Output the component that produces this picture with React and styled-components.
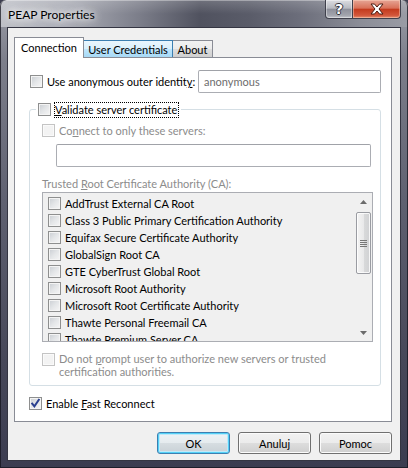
import React from 'react';
import styled, { createGlobalStyle, css } from 'styled-components';

const GlobalStyle = createGlobalStyle`
  html, body {
    margin: 0;
    padding: 0;
    width: 408px;
    height: 468px;
    overflow: hidden;
    background: #3d3e50;
  }
  body {
    font-family: Lato, "Noto Sans", "Liberation Sans", sans-serif;
    font-size: 11px;
    color: #000;
  }
  * { box-sizing: border-box; }
`;

const Window = styled.div`
  width: 408px;
  height: 468px;
  padding: 0 7px 7px;
  display: flex;
  flex-direction: column;
  border-radius: 6px 6px 0 0;
  box-shadow: inset 0 0 0 1px rgba(20, 20, 30, 0.75);
  background: linear-gradient(180deg, #9c9ea8 0px, #7d7f8b 60px, #5f6171 200px, #474859 360px, #3b3c50 468px);
`;

const TitleBar = styled.div`
  height: 27px;
  margin: 0 -7px;
  padding: 0 7px 0 8px;
  display: flex;
  align-items: flex-start;
  border-radius: 6px 6px 0 0;
  box-shadow: inset 0 1px 0 rgba(255, 255, 255, 0.35), inset 1px 0 0 rgba(20, 20, 30, 0.75), inset -1px 0 0 rgba(20, 20, 30, 0.75);
  background:
    linear-gradient(180deg, rgba(255, 255, 255, 0.18) 0, rgba(255, 255, 255, 0) 14px),
    linear-gradient(90deg, #bfc1c8 0px, #a9abb4 70px, #7b7d89 140px, #50525f 200px, #5a5c69 250px, #6c6e7b 300px, #8b8d97 360px, #9a9ca5 408px);
`;

const Title = styled.div`
  padding-top: 7px;
  line-height: 16px;
  font-size: 12px;
  color: #000;
  white-space: nowrap;
  text-shadow: 0 0 6px #fff, 0 0 10px rgba(255, 255, 255, 0.9), 0 0 14px rgba(255, 255, 255, 0.7);
`;

const Caption = styled.div`
  margin-left: auto;
  display: flex;
`;

const CaptionButton = styled.div`
  width: ${p => p.$w}px;
  height: 19px;
  display: flex;
  align-items: center;
  justify-content: center;
  border: 1px solid #3f404c;
  border-top: none;
  ${p => p.$close ? css`
    border-radius: 0 0 4px 0;
    border-left: none;
    background: linear-gradient(180deg, #e6a595 0%, #d97159 45%, #c43b1e 52%, #d2563a 85%, #e58e6f 100%);
    box-shadow: inset 0 0 0 1px rgba(255, 220, 200, 0.45);
  ` : css`
    border-radius: 0 0 0 4px;
    background: linear-gradient(180deg, #dcdde2 0%, #b9bbc2 45%, #8f919c 52%, #a2a4ad 85%, #c3c5cb 100%);
    box-shadow: inset 0 0 0 1px rgba(255, 255, 255, 0.4);
  `}
`;

const HelpGlyph = styled.span`
  font-family: "DejaVu Sans", sans-serif;
  font-weight: bold;
  font-size: 14px;
  line-height: 14px;
  color: #fff;
  text-shadow: 1px 0 0 #30323c, -1px 0 0 #30323c, 0 1px 0 #30323c, 0 -1px 0 #30323c;
`;

const Client = styled.div`
  flex: 1;
  display: flex;
  flex-direction: column;
  background: #f0f0f0;
  border: 1px solid #343542;
  padding: 9px 8px 6px 6px;
`;

const TabStrip = styled.div`
  height: 20px;
  display: flex;
  align-items: flex-end;
`;

const Tab = styled.div`
  width: ${p => p.$w}px;
  height: 17px;
  display: flex;
  align-items: center;
  justify-content: center;
  white-space: nowrap;
  border: 1px solid #898c95;
  border-bottom: none;
  margin-left: -1px;
  background: linear-gradient(180deg, #f2f2f2 0%, #ebebeb 50%, #dddddd 51%, #cfcfcf 100%);
  ${p => p.$hover && css`
    border-color: #3c7fb1;
    position: relative;
    z-index: 1;
    background: linear-gradient(180deg, #eaf6fd 0%, #d9f0fc 50%, #bee6fd 51%, #a7d9f5 100%);
  `}
  ${p => p.$active && css`
    height: 21px;
    margin-left: 0;
    margin-bottom: -1px;
    position: relative;
    z-index: 2;
    background: #fff;
    padding-bottom: 2px;
  `}
`;

const Panel = styled.div`
  height: 365px;
  background: #fff;
  border: 1px solid #898c95;
  padding: 12px 10px 0 14px;
  display: flex;
  flex-direction: column;
`;

const Row = styled.div`
  display: flex;
  align-items: ${p => p.$top ? 'flex-start' : 'center'};
  min-height: ${p => p.$h || 15}px;
  margin-top: ${p => p.$mt || 0}px;
  padding-left: ${p => p.$pl || 0}px;
  color: ${p => p.$disabled ? '#8c8c8c' : '#000'};
  line-height: 13px;
  white-space: nowrap;
`;

const Box = styled.span`
  flex: none;
  width: 13px;
  height: 13px;
  margin-right: 4px;
  margin-top: ${p => p.$mt || 0}px;
  display: inline-flex;
  align-items: center;
  justify-content: center;
  border: 1px solid #8e8f8f;
  background: linear-gradient(135deg, #c9cdd2 0%, #e4e6e8 50%, #f6f6f6 100%);
  box-shadow: inset 0 0 0 1px #f4f4f4;
  ${p => p.$disabled && css`
    border-color: #c4c4c4;
    background: #f3f3f3;
    box-shadow: inset 0 0 0 1px #fafafa;
  `}
`;

const Check = ({ checked, disabled, mt }) => (
  <Box $disabled={disabled} $mt={mt}>
    {checked && (
      <svg width="11" height="11" viewBox="0 0 11 11">
        <path d="M2.2 5.6 L4.4 8.4 L8.8 1.8" fill="none" stroke="#2a3f8f" strokeWidth="2" strokeLinecap="square" />
      </svg>
    )}
  </Box>
);

const TextInput = styled.div`
  height: 23px;
  width: ${p => p.$w}px;
  margin-left: ${p => p.$ml || 0}px;
  margin-top: ${p => p.$mt || 0}px;
  display: flex;
  align-items: center;
  padding-left: 5px;
  background: #fff;
  border: 1px solid #abadb3;
  border-top-color: #a0a2a8;
  border-radius: 2px;
  color: #6d6d6d;
`;

const Group = styled.fieldset`
  margin: 9px 0 0;
  padding: 6px 7px 7px 12px;
  border: 1px solid #d5dfe5;
  border-radius: 3px;
  min-width: 0;
`;

const Legend = styled.legend`
  margin-left: -6px;
  padding: 0 3px 0 2px;
  height: 15px;
`;

const LegendInner = styled.span`
  display: inline-flex;
  align-items: center;
  height: 15px;
  white-space: nowrap;
`;

const Focus = styled.span`
  outline: 1px dotted #000;
  outline-offset: 0;
  line-height: 13px;
  padding: 0 1px 1px 0;
`;

const Label = styled.div`
  margin-top: ${p => p.$mt || 0}px;
  height: 16px;
  line-height: 16px;
  color: #8c8c8c;
  white-space: nowrap;
`;

const ListBox = styled.div`
  height: 150px;
  display: flex;
  border: 1px solid #abadb3;
  background: #f0f0f0;
  overflow: hidden;
`;

const Items = styled.div`
  flex: 1;
  padding: 2px 0 0 5px;
  overflow: hidden;
`;

const Item = styled.div`
  height: 17px;
  display: flex;
  align-items: center;
  white-space: nowrap;
`;

const ScrollBar = styled.div`
  width: 17px;
  display: flex;
  flex-direction: column;
`;

const Arrow = styled.div`
  height: 17px;
  display: flex;
  align-items: center;
  justify-content: center;
`;

const Track = styled.div`
  flex: 1;
  padding: 2px 1px 0 0;
`;

const Thumb = styled.div`
  height: 62px;
  width: 15px;
  margin-left: 1px;
  border: 1px solid #9a9ca2;
  border-radius: 2px;
  display: flex;
  align-items: center;
  justify-content: center;
  background: linear-gradient(90deg, #f4f4f4 0%, #e9e9ea 50%, #d9dadb 51%, #d0d1d3 100%);
  box-shadow: inset 0 0 0 1px rgba(255, 255, 255, 0.8);
`;

const Grip = styled.div`
  width: 7px;
  height: 7px;
  background: repeating-linear-gradient(180deg, #777 0, #777 1px, transparent 1px, transparent 2px);
`;

const Buttons = styled.div`
  margin-top: 10px;
  display: flex;
  justify-content: flex-end;
  gap: 8px;
`;

const Button = styled.div`
  width: 73px;
  height: 22px;
  display: flex;
  align-items: center;
  justify-content: center;
  border: 1px solid #707070;
  border-radius: 3px;
  background: linear-gradient(180deg, #f2f2f2 0%, #ebebeb 50%, #dddddd 51%, #cfcfcf 100%);
  box-shadow: inset 0 0 0 1px #fbfbfb;
  ${p => p.$default && css`
    border-color: #3c7fb1;
    background: linear-gradient(180deg, #eef3f6 0%, #e5ebee 50%, #d6dde1 51%, #c9d1d6 100%);
    box-shadow: inset 0 0 0 1px #54d1f7, inset 0 0 0 2px #bfe9f9;
  `}
`;

const ArrowIcon = ({ up }) => (
  <svg width="7" height="4" viewBox="0 0 7 4">
    <path d={up ? 'M0 4 L3.5 0 L7 4 Z' : 'M0 0 L3.5 4 L7 0 Z'} fill="#6b6b6b" />
  </svg>
);

const certs = [
  'AddTrust External CA Root',
  'Class 3 Public Primary Certification Authority',
  'Equifax Secure Certificate Authority',
  'GlobalSign Root CA',
  'GTE CyberTrust Global Root',
  'Microsoft Root Authority',
  'Microsoft Root Certificate Authority',
  'Thawte Personal Freemail CA',
  'Thawte Premium Server CA',
];

export default function App() {
  return (
    <>
      <GlobalStyle />
      <Window>
        <TitleBar>
          <Title>PEAP Properties</Title>
          <Caption>
            <CaptionButton $w={28}><HelpGlyph>?</HelpGlyph></CaptionButton>
            <CaptionButton $w={48} $close>
              <svg width="14" height="12" viewBox="0 0 14 12">
                <path d="M1 1 H4.5 L7 4 L9.5 1 H13 L9 6 L13 11 H9.5 L7 8 L4.5 11 H1 L5 6 Z" fill="#fff" stroke="#4a1c12" strokeWidth="1" strokeLinejoin="round" />
              </svg>
            </CaptionButton>
          </Caption>
        </TitleBar>

        <Client>
          <TabStrip>
            <Tab $w={70} $active>Connection</Tab>
            <Tab $w={90} $hover>User Credentials</Tab>
            <Tab $w={41}>About</Tab>
          </TabStrip>

          <Panel>
            <Row $h={23} $pl={1}>
              <Check />
              <span>Use anonymous outer identit<u>y</u>:</span>
              <TextInput $w={183} style={{ marginLeft: 'auto' }}>anonymous</TextInput>
            </Row>

            <Group>
              <Legend>
                <LegendInner>
                  <Check />
                  <Focus><u>V</u>alidate server certificate</Focus>
                </LegendInner>
              </Legend>

              <Row $disabled>
                <Check disabled />
                <span>Co<u>n</u>nect to only these servers:</span>
              </Row>
              <TextInput $w={315} $ml={14} $mt={6} />

              <Label $mt={9}>Trusted <u>R</u>oot Certificate Authority (CA):</Label>
              <ListBox>
                <Items>
                  {certs.map(name => (
                    <Item key={name}>
                      <Check />
                      <span>{name}</span>
                    </Item>
                  ))}
                </Items>
                <ScrollBar>
                  <Arrow><ArrowIcon up /></Arrow>
                  <Track>
                    <Thumb><Grip /></Thumb>
                  </Track>
                  <Arrow><ArrowIcon /></Arrow>
                </ScrollBar>
              </ListBox>

              <Row $top $disabled $mt={10}>
                <Check disabled mt={1} />
                <span>
                  Do not <u>p</u>rompt user to authorize new servers or trusted<br />
                  certification authorities.
                </span>
              </Row>
            </Group>

            <Row $mt={10}>
              <Check checked />
              <span>Enable <u>F</u>ast Reconnect</span>
            </Row>
          </Panel>

          <Buttons>
            <Button $default>OK</Button>
            <Button>Anuluj</Button>
            <Button>Pomoc</Button>
          </Buttons>
        </Client>
      </Window>
    </>
  );
}
